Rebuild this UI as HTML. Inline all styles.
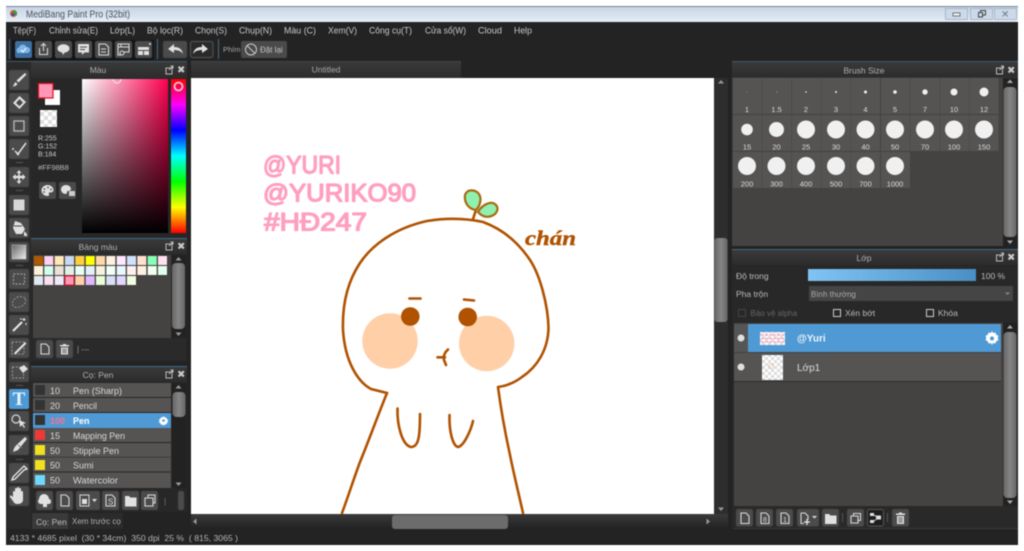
<!DOCTYPE html>
<html><head><meta charset="utf-8"><title>MediBang Paint Pro</title>
<style>
html,body{margin:0;padding:0;background:#fff;width:1024px;height:551px;overflow:hidden}
svg{display:block;filter:blur(.4px)}
text{font-family:"Liberation Sans","DejaVu Sans",sans-serif;font-size:9px;fill:#c4c4c4}
.b{fill:#4b4b4b;stroke:#3a3a3a;stroke-width:.5}
.i{fill:#e0e0e0}
.s{fill:none;stroke:#d8d8d8;stroke-width:1.1}
.l{font-size:7.5px;fill:#ddd;text-anchor:middle}
.h{fill:#b0b0b0;text-anchor:middle;font-size:8.5px}
.d{fill:#f0f0f0}
.c{fill:#555453}
.m{font-size:9.5px;fill:#c8c8c8}
.p{fill:none;stroke:#b05200;stroke-width:2.600;stroke-linecap:round;stroke-linejoin:round}
.t{font-size:25px;fill:#ff9fc0;stroke:#ff9fc0;stroke-width:1.300;stroke-linejoin:round}
.br{font-size:9px;fill:#d8d8d8}
</style></head><body>
<svg width="1024" height="551" viewBox="0 0 1024 551" xmlns="http://www.w3.org/2000/svg">
<defs>
<linearGradient id="tb" x1="0" y1="0" x2="0" y2="1"><stop offset="0" stop-color="#c6d4e4"/><stop offset="1" stop-color="#e6eef7"/></linearGradient>
<linearGradient id="sv1" x1="0" y1="0" x2="1" y2="0"><stop offset="0" stop-color="#fff"/><stop offset="1" stop-color="#ff0050"/></linearGradient>
<linearGradient id="sv2" x1="0" y1="0" x2="0" y2="1"><stop offset="0" stop-color="#000" stop-opacity="0"/><stop offset="1" stop-color="#000"/></linearGradient>
<linearGradient id="hue" x1="0" y1="0" x2="0" y2="1"><stop offset="0" stop-color="#f00"/><stop offset=".167" stop-color="#f0f"/><stop offset=".333" stop-color="#00f"/><stop offset=".5" stop-color="#0ff"/><stop offset=".667" stop-color="#0f0"/><stop offset=".833" stop-color="#ff0"/><stop offset="1" stop-color="#f00"/></linearGradient>
<linearGradient id="op" x1="0" y1="0" x2="1" y2="0"><stop offset="0" stop-color="#80c4f4"/><stop offset="1" stop-color="#4a8fc4"/></linearGradient>
<linearGradient id="hd" x1="0" y1="0" x2="0" y2="1"><stop offset="0" stop-color="#3a3a3a"/><stop offset="1" stop-color="#2c2c2c"/></linearGradient>
<linearGradient id="th" x1="0" y1="0" x2="1" y2="0"><stop offset="0" stop-color="#666"/><stop offset=".5" stop-color="#858585"/><stop offset="1" stop-color="#666"/></linearGradient>
<linearGradient id="gr" x1="0" y1="0" x2="1" y2="1"><stop offset="0" stop-color="#666"/><stop offset="1" stop-color="#eee"/></linearGradient>
<linearGradient id="hs" x1="0" y1="0" x2="0" y2="1"><stop offset="0" stop-color="#3a3a3a"/><stop offset="1" stop-color="#222"/></linearGradient>
<pattern id="ck" width="8" height="8" patternUnits="userSpaceOnUse"><rect width="8" height="8" fill="#fff"/><rect width="4" height="4" fill="#ddd"/><rect x="4" y="4" width="4" height="4" fill="#ddd"/></pattern>
<pattern id="ck2" width="6" height="6" patternUnits="userSpaceOnUse"><rect width="6" height="6" fill="#fff"/><rect width="3" height="3" fill="#ddd"/><rect x="3" y="3" width="3" height="3" fill="#ddd"/></pattern>
</defs>

<rect x="6" y="6" width="1012" height="539" fill="#232323"/>
<!-- title -->
<rect x="6" y="7" width="1012" height="15" fill="url(#tb)"/>
<rect x="6" y="6" width="1012" height="1" fill="#7d8894"/>
<circle cx="13.5" cy="13.5" r="3.5" fill="#d8562c"/><path d="M13.500 10a3.500 3.500 0 0 1 3 5.500l-3-2z" fill="#3d9a4a"/><circle cx="13" cy="14.500" r="1.600" fill="#2d5d9c"/>
<text x="26" y="17.500" textLength="104" lengthAdjust="spacingAndGlyphs" style="font-size:9.700px;fill:#4b5058">MediBang Paint Pro (32bit)</text>
<g fill="#ccd9e8" stroke="#97a8ba" stroke-width=".7"><rect x="945.500" y="8.500" width="22" height="11"/><rect x="970.500" y="8.500" width="22" height="11"/><rect x="994.500" y="8.500" width="22" height="11"/></g>
<rect x="953" y="13" width="7" height="3" fill="#f4f8fc" stroke="#444" stroke-width=".7"/>
<path d="M978.500 12.500h4v4.500h-4zM980.500 12.500v-2h5v4.500h-3" fill="none" stroke="#444"/>
<text x="1001" y="17.500" style="font-size:10px;fill:#6c7888">✕</text>

<!-- menu -->
<g>
<text class="m" x="13" y="33.500" textLength="23" lengthAdjust="spacingAndGlyphs">Tệp(F)</text><text class="m" x="49" y="33.500" textLength="49" lengthAdjust="spacingAndGlyphs">Chỉnh sửa(E)</text><text class="m" x="110" y="33.500" textLength="25" lengthAdjust="spacingAndGlyphs">Lớp(L)</text><text class="m" x="147" y="33.500" textLength="36" lengthAdjust="spacingAndGlyphs">Bộ lọc(R)</text><text class="m" x="195" y="33.500" textLength="32" lengthAdjust="spacingAndGlyphs">Chọn(S)</text><text class="m" x="239" y="33.500" textLength="33" lengthAdjust="spacingAndGlyphs">Chụp(N)</text><text class="m" x="284" y="33.500" textLength="32" lengthAdjust="spacingAndGlyphs">Màu (C)</text><text class="m" x="328" y="33.500" textLength="29" lengthAdjust="spacingAndGlyphs">Xem(V)</text><text class="m" x="369" y="33.500" textLength="43" lengthAdjust="spacingAndGlyphs">Công cụ(T)</text><text class="m" x="425" y="33.500" textLength="41" lengthAdjust="spacingAndGlyphs">Cửa sổ(W)</text><text class="m" x="478" y="33.500" textLength="24" lengthAdjust="spacingAndGlyphs">Cloud</text><text class="m" x="514" y="33.500" textLength="18" lengthAdjust="spacingAndGlyphs">Help</text>
</g>

<!-- toolbar -->
<rect x="9" y="39" width="1" height="20" fill="#4d6a80"/><rect x="157" y="39" width="1" height="20" fill="#4d6a80"/><rect x="218" y="39" width="1" height="20" fill="#4d6a80"/>
<rect x="12" y="40" width="142" height="20" fill="#151515"/>
<rect x="15" y="41" width="17" height="17" rx="2" fill="#3e6f9e"/>
<path d="M18 53a3 3 0 0 1 1-5.500 4 4 0 0 1 7.500-.5 3 3 0 0 1 1 6z" fill="#7fb6ea"/><path d="M21 50l2 2 3-4" stroke="#fff" fill="none"/>
<g class="b"><rect x="35" y="41" width="17" height="17" rx="2"/><rect x="55" y="41" width="17" height="17" rx="2"/><rect x="75" y="41" width="17" height="17" rx="2"/><rect x="95" y="41" width="17" height="17" rx="2"/><rect x="115" y="41" width="17" height="17" rx="2"/><rect x="135" y="41" width="17" height="17" rx="2"/><rect x="163" y="41" width="24" height="17" rx="2"/></g>
<rect x="190.500" y="41.500" width="22.500" height="16" rx="2" fill="#2a2a2a" stroke="#555"/>
<path class="s" d="M39.500 48v6.500h8v-6.500M43.500 51v-7M41 46l2.500-2.500 2.500 2.500"/>
<ellipse cx="63.500" cy="48.500" rx="6" ry="4.200" class="i"/><path class="i" d="M62 52l1 3 2-3z"/>
<rect x="78" y="44" width="11" height="8.500" class="i"/><path class="i" d="M82 52v3l3-3z"/><path d="M80 47h7M80 49.500h5" stroke="#4b4b4b"/>
<path class="s" d="M99 44h6.500l3 3v8h-9.500zM101 49h5M101 52h5"/>
<path class="s" d="M118 44h11v8h-5M118 44v11h4M118 47h11M121 44v3"/><circle cx="122" cy="53" r="2" class="s"/>
<path class="i" d="M138 47h11v3h-11zM138 51h5v4h-5zM144 51h5v4h-5z"/><circle cx="150" cy="44" r="1" class="i"/>
<path class="i" d="M168 49l6-5v3c5 0 8 2 9 7-2-3-5-4-9-4v3z"/>
<path class="i" d="M208 49l-6-5v3c-5 0-8 2-9 7 2-3 5-4 9-4v3z"/>
<text x="223" y="52" style="font-size:7.500px;fill:#aaa">Phím</text>
<rect x="241" y="41" width="46" height="17" rx="2" fill="#4a4a4a"/>
<circle cx="251" cy="49.500" r="5.500" fill="none" stroke="#ccc" stroke-width="1"/><path d="M247 45.500l8 8" stroke="#ccc"/>
<text x="260" y="52.500" style="font-size:8px;fill:#c4c4c4">Đặt lại</text>

<!-- tool column -->
<rect x="7" y="61" width="24" height="468" fill="#2a2a2a"/>
<rect x="7" y="61" width="24" height="1" fill="#3d5566"/>
<g class="b">
<rect x="9" y="70" width="20" height="20" rx="2"/><rect x="9" y="93" width="20" height="20" rx="2"/><rect x="9" y="116" width="20" height="20" rx="2"/><rect x="9" y="139" width="20" height="20" rx="2"/><rect x="9" y="167" width="20" height="20" rx="2"/><rect x="9" y="195" width="20" height="20" rx="2"/><rect x="9" y="218" width="20" height="20" rx="2"/><rect x="9" y="242" width="20" height="20" rx="2"/><rect x="9" y="269" width="20" height="20" rx="2"/><rect x="9" y="292" width="20" height="20" rx="2"/><rect x="9" y="315" width="20" height="20" rx="2"/><rect x="9" y="338" width="20" height="20" rx="2"/><rect x="9" y="362" width="20" height="20" rx="2"/><rect x="9" y="411" width="20" height="20" rx="2"/><rect x="9" y="435" width="20" height="20" rx="2"/><rect x="9" y="463" width="20" height="20" rx="2"/><rect x="9" y="486" width="20" height="20" rx="2"/>
</g>
<g fill="#555"><rect x="16" y="162" width="7" height="1"/><rect x="16" y="190" width="7" height="1"/><rect x="16" y="265" width="7" height="1"/><rect x="16" y="385" width="7" height="1"/><rect x="16" y="459" width="7" height="1"/></g>
<path class="i" d="M25 73l1.500 1.500-8 8-2-2zM15.500 82l2 2c-1 1.500-3 2.500-5 2.500 1.500-1 1.500-3 3-4.500z"/>
<path class="i" fill-rule="evenodd" d="M19.500 96l6.500 6-6.500 7-6.500-6zM19.500 99l-3.500 4 3.500 3.300 3.500-3.800z"/>
<rect x="14" y="121" width="10" height="10" fill="none" stroke="#bbb" stroke-width="1.300"/>
<path d="M26 143l-8 11-3-3" fill="none" stroke="#e0e0e0" stroke-width="1.500"/><circle cx="13" cy="149" r="1" class="i"/><circle cx="18" cy="154" r="1.300" class="i"/>
<path class="i" d="M19 170l2.500 3h-1.700v2.700H22.500V174l3 3-3 3v-1.700h-2.700V181H21.500L19 184l-2.500-3h1.700v-2.700H15.500V180l-3-3 3-3v1.700h2.700V173H16.500z"/>
<rect x="13.500" y="199.500" width="11" height="11" fill="#d8d8d8"/>
<path class="i" d="M15 221l6 2 4 6-3 5h-6l-3-6zM24 231l3 3v2h-3z"/><path d="M14 226h8" stroke="#4b4b4b"/>
<rect x="12" y="245" width="14" height="14" fill="url(#gr)" stroke="#ccc" stroke-width=".5"/>
<rect x="13.500" y="274" width="11" height="10" fill="none" stroke="#aaa" stroke-dasharray="2 1.500"/>
<ellipse cx="19" cy="302" rx="7" ry="5" fill="none" stroke="#999" stroke-dasharray="2 1.500" transform="rotate(-25 19 302)"/>
<path d="M13 331l9-9" stroke="#e8e8e8" stroke-width="2"/><path d="M24 318v3M22.500 319.500h3M20 319h2M26 323v2" stroke="#e8e8e8"/>
<rect x="12" y="342" width="12" height="12" fill="none" stroke="#999" stroke-dasharray="2 1.500"/><path d="M14 353l11-11 1.500 1.500-11 11z" class="i"/>
<rect x="12.500" y="367" width="11" height="11" fill="none" stroke="#999" stroke-dasharray="2 1.500"/><path class="i" d="M19 368l5-3 4 4-5 4z"/>
<rect x="9" y="389" width="20" height="20" rx="2" fill="#4e9ad6"/>
<text x="19" y="405" style="font-family:'Liberation Serif',serif;font-size:19px;font-weight:bold;fill:#eaf4fb;text-anchor:middle">T</text>
<circle cx="16" cy="419" r="4" fill="none" stroke="#d8d8d8" stroke-width="1.200"/><path class="i" d="M19 420l7 3-3 1 2 3-1 1-2-3-2 2z"/>
<path class="i" d="M25 437l2 2-9 11-5 2c.5-2 1-4 2.500-6z"/><path d="M18 445l4 3" stroke="#777"/>
<path d="M24 466l3 3-3 1-9 9-3 1 1-3 9-9z" fill="none" stroke="#e8e8e8" stroke-width="1.300"/>
<path class="i" d="M13 497v-5a1 1 0 0 1 2 0v2-5a1 1 0 0 1 2 0v5-6a1 1 0 0 1 2 0v6-5a1 1 0 0 1 2 0v6-3a1 1 0 0 1 2 0v8c0 2-2 4-5 4s-4-1-5-3l-3-4c-.7-1 .7-2 1.500-1.300z"/>

<!-- Color panel -->
<rect x="31" y="61" width="156" height="177" fill="#272727"/>
<rect x="31" y="61" width="156" height="1" fill="#3d5566"/>
<rect x="31" y="62" width="156" height="16" fill="url(#hd)"/>
<text class="h" x="98" y="73">Màu</text>
<path d="M166 68h6v6h-6z" fill="none" stroke="#bbb"/><path d="M169 70l4-4M170.500 66h2.500v2.500" stroke="#bbb" fill="none"/>
<text x="177" y="73" style="font-size:10px;font-weight:bold;fill:#ccc">✖</text>
<rect x="45" y="90" width="15" height="15" fill="#fff"/>
<rect x="38.500" y="83.500" width="14.500" height="14.500" fill="#ff98b8" stroke="#e01020" stroke-width="1.200"/>
<rect x="40" y="110" width="17" height="17" fill="url(#ck)"/>
<text x="38" y="140.500" style="font-size:7px;fill:#ccc">R:255</text>
<text x="38" y="148.500" style="font-size:7px;fill:#ccc">G:152</text>
<text x="38" y="156.500" style="font-size:7px;fill:#ccc">B:184</text>
<text x="38" y="170" style="font-size:7.500px;fill:#bbb">#FF98B8</text>
<rect x="39" y="182" width="17" height="17" rx="2" fill="#4a4a4a"/><rect x="59" y="182" width="17" height="17" rx="2" fill="#4a4a4a"/>
<path class="i" d="M47.500 185c3.500 0 6 2.500 6 5 0 2-2 2.500-3.500 2.500-1.500 0-1.500 1-1 1.500.5 1.500-.5 2-1.500 2-3.500 0-6-2.500-6-5.500s2.500-5.500 6-5.500z"/><g fill="#4a4a4a"><circle cx="44.500" cy="189" r=".9"/><circle cx="48" cy="187.500" r=".9"/><circle cx="51" cy="189.500" r=".9"/><circle cx="44" cy="192" r=".9"/></g>
<path class="i" d="M66 185c3 0 5 2 5 4 0 1.500-2 2-3 2s-1 1-1 1.500-.5 1.500-1 1.500c-3 0-5-2-5-4.500s2-4.500 5-4.500z"/><rect x="69" y="191" width="6" height="5" fill="#ccc"/>
<rect x="82" y="79" width="86" height="154" fill="url(#sv1)"/>
<rect x="82" y="79" width="86" height="154" fill="url(#sv2)"/>
<rect x="171" y="79" width="15" height="154" fill="url(#hue)"/>
<circle cx="178.500" cy="86.500" r="4" fill="none" stroke="#f4c8d8" stroke-width="1.800"/>
<path d="M113 79a4 4 0 0 0 8 0" fill="none" stroke="#f4dbe4" stroke-width="1.200"/>

<!-- Palette panel -->
<rect x="31" y="238" width="156" height="124" fill="#272727"/>
<rect x="31" y="238" width="156" height="1" fill="#3f6a88"/>
<rect x="31" y="239" width="156" height="15" fill="url(#hd)"/>
<text class="h" x="98" y="250">Bảng màu</text>
<path d="M166 244h6v6h-6z" fill="none" stroke="#bbb"/><path d="M169 246l4-4M170.500 242h2.500v2.500" stroke="#bbb" fill="none"/>
<text x="177" y="249.500" style="font-size:10px;font-weight:bold;fill:#ccc">✖</text>
<rect x="33" y="255" width="138" height="83" fill="#454341"/>
<g>
<rect x="34" y="256" width="9" height="9" fill="#b05a00"/><rect x="44.300" y="256" width="9" height="9" fill="#ffd0f0"/><rect x="54.700" y="256" width="9" height="9" fill="#ffe8b8"/><rect x="65" y="256" width="9" height="9" fill="#c8d8f0"/><rect x="75.300" y="256" width="9" height="9" fill="#ffcc44"/><rect x="85.700" y="256" width="9" height="9" fill="#ffff00"/><rect x="96" y="256" width="9" height="9" fill="#ffd8a8"/><rect x="106.300" y="256" width="9" height="9" fill="#fff0e0"/><rect x="116.700" y="256" width="9" height="9" fill="#ffe8ff"/><rect x="127" y="256" width="9" height="9" fill="#d0e0ff"/><rect x="137.300" y="256" width="9" height="9" fill="#ffe0d0"/><rect x="147.700" y="256" width="9" height="9" fill="#88ffb8"/><rect x="158" y="256" width="9" height="9" fill="#ffe0f0"/>
<rect x="34" y="266" width="9" height="9" fill="#fff0d8"/><rect x="44.300" y="266" width="9" height="9" fill="#d0ffee"/><rect x="54.700" y="266" width="9" height="9" fill="#ece0d8"/><rect x="65" y="266" width="9" height="9" fill="#e0f0e8"/><rect x="75.300" y="266" width="9" height="9" fill="#e8fff8"/><rect x="85.700" y="266" width="9" height="9" fill="#e4f0f8"/><rect x="96" y="266" width="9" height="9" fill="#f8f0e0"/><rect x="106.300" y="266" width="9" height="9" fill="#f0fff8"/><rect x="116.700" y="266" width="9" height="9" fill="#e8f8ff"/><rect x="127" y="266" width="9" height="9" fill="#fff0f0"/><rect x="137.300" y="266" width="9" height="9" fill="#fff0e0"/><rect x="147.700" y="266" width="9" height="9" fill="#f0fff0"/><rect x="158" y="266" width="9" height="9" fill="#e0fff0"/>
<rect x="34" y="276" width="9" height="9" fill="#e0e8f0"/><rect x="44.300" y="276" width="9" height="9" fill="#f8e0f0"/><rect x="54.700" y="276" width="9" height="9" fill="#f0e8f8"/><rect x="65" y="276" width="9" height="9" fill="#ff98b8" stroke="#e01020"/><rect x="75.300" y="276" width="9" height="9" fill="#ffd0a8"/><rect x="85.700" y="276" width="9" height="9" fill="#e0b8ff"/><rect x="96" y="276" width="9" height="9" fill="#e8ffd8"/><rect x="106.300" y="276" width="9" height="9" fill="#d8e0f8"/><rect x="116.700" y="276" width="9" height="9" fill="#e0d8ff"/><rect x="127" y="276" width="9" height="9" fill="#f0ffe0"/>
</g>
<rect x="172" y="255" width="14" height="83" fill="#222"/>
<rect x="172" y="263" width="13" height="66" rx="4" fill="url(#th)"/>
<path d="M178.500 257l3 3.500h-6zM178.500 336l3-3.500h-6z" fill="#999"/>
<rect x="33" y="338" width="153" height="22" fill="#2a2a2a"/>
<rect x="36" y="340" width="17" height="18" rx="2" class="b"/><rect x="56" y="340" width="17" height="18" rx="2" class="b"/>
<path class="s" d="M41 344h5l3 3v7h-8z"/>
<path class="i" d="M60 345h9v1.500h-9zM63 344h3v1h-3zM61 347.500h7v7h-7z"/><path d="M63 348.500v5M64.500 348.500v5M66 348.500v5" stroke="#4b4b4b" stroke-width=".7"/>
<text x="77" y="352" style="font-size:8px;fill:#999">| ---</text>

<!-- Brush panel -->
<rect x="31" y="366" width="156" height="146" fill="#272727"/>
<rect x="31" y="366" width="156" height="1" fill="#3f6a88"/>
<rect x="31" y="367" width="156" height="15" fill="url(#hd)"/>
<text class="h" x="98" y="378">Cọ: Pen</text>
<path d="M166 372h6v6h-6z" fill="none" stroke="#bbb"/><path d="M169 374l4-4M170.500 370h2.500v2.500" stroke="#bbb" fill="none"/>
<text x="177" y="377.500" style="font-size:10px;font-weight:bold;fill:#ccc">✖</text>
<g fill="#555453">
<rect x="33" y="383" width="138" height="14"/><rect x="33" y="398" width="138" height="14"/><rect x="33" y="428" width="138" height="14"/><rect x="33" y="443" width="138" height="14"/><rect x="33" y="457.500" width="138" height="14"/><rect x="33" y="472.500" width="138" height="15.500"/>
</g>
<rect x="33" y="413" width="138" height="15" fill="#4f9ad4"/>
<g><rect x="35" y="385" width="10" height="10" fill="#333"/><rect x="35" y="400" width="10" height="10" fill="#333"/><rect x="35" y="415" width="10" height="10" fill="#333"/><rect x="35" y="430" width="10" height="10" fill="#f03838"/><rect x="35" y="445" width="10" height="10" fill="#f0e020"/><rect x="35" y="460" width="10" height="10" fill="#f0e020"/><rect x="35" y="475" width="10" height="10" fill="#70d8ff"/></g>
<text class="br" x="50" y="394">10</text><text class="br" x="73" y="394" textLength="49" lengthAdjust="spacingAndGlyphs">Pen (Sharp)</text>
<text class="br" x="50" y="409">20</text><text class="br" x="73" y="409" textLength="24" lengthAdjust="spacingAndGlyphs">Pencil</text>
<text class="br" x="50" y="424" style="fill:#ff7090;font-weight:bold">100</text><text class="br" x="73" y="424" style="fill:#fff;font-weight:bold">Pen</text>
<text class="br" x="50" y="439">15</text><text class="br" x="73" y="439" textLength="52" lengthAdjust="spacingAndGlyphs">Mapping Pen</text>
<text class="br" x="50" y="454">50</text><text class="br" x="73" y="454" textLength="46" lengthAdjust="spacingAndGlyphs">Stipple Pen</text>
<text class="br" x="50" y="468.500">50</text><text class="br" x="73" y="468.500">Sumi</text>
<text class="br" x="50" y="483.500">50</text><text class="br" x="73" y="483.500" textLength="45" lengthAdjust="spacingAndGlyphs">Watercolor</text>
<path d="M163.500 416l1 1.500 1.500-.3.500 1.500 1.500.8-.5 1.500.5 1.500-1.500.8-.5 1.500-1.500-.3-1 1.300-1-1.300-1.500.3-.5-1.500-1.500-.8.5-1.500-.5-1.500 1.500-.8.5-1.500 1.500.3z" fill="#fff"/><circle cx="163.500" cy="420.500" r="1.300" fill="#4f9ad4"/>
<rect x="172" y="383" width="14" height="105" fill="#222"/>
<rect x="172.500" y="392" width="13" height="25" rx="4" fill="url(#th)"/>
<path d="M178.500 385l3 3.500h-6zM178.500 486l3-3.500h-6z" fill="#999"/>
<g class="b"><rect x="36" y="491" width="17" height="19" rx="2"/><rect x="56" y="491" width="17" height="19" rx="2"/><rect x="76" y="491" width="24" height="19" rx="2"/><rect x="102" y="491" width="17" height="19" rx="2"/><rect x="122" y="491" width="17" height="19" rx="2"/><rect x="141" y="491" width="17" height="19" rx="2"/><rect x="178" y="491" width="6" height="19" rx="2"/></g>
<path class="i" d="M39 499a5 5 0 0 1 10 0c1 0 2 1 2 2.500s-1 2.500-2 2.500h-2v3h-4v-3h-2c-1 0-3-1-3-2.500s1-2.500 1-2.500z"/>
<path class="s" d="M61 495h5l3 3v8h-8z"/>
<rect x="80" y="495" width="9" height="11" fill="none" stroke="#d8d8d8"/><rect x="82" y="499" width="5" height="5" class="i"/><path class="i" d="M92 499h5l-2.500 3z"/>
<path class="s" d="M106 495h6l3 3v8h-9z"/><text x="108" y="504.500" style="font-size:8px;fill:#ddd">S</text>
<path class="i" d="M125 496h4l1.500 1.500h6v9h-11.500z"/>
<path class="s" d="M145 498h8v8h-8zM148 498v-3h7v8h-2"/>
<text x="164" y="504" style="font-size:8px;fill:#777">|</text>

<!-- tabs -->
<rect x="32" y="513" width="36" height="16" fill="#3a3a3a"/>
<rect x="68" y="513" width="55" height="16" fill="#2b2b2b"/>
<text x="36" y="525" style="font-size:8.500px;fill:#c0c0c0">Cọ: Pen</text>
<text x="72" y="524" style="font-size:8px;fill:#b0b0b0">Xem trước cọ</text>

<!-- Canvas -->
<rect x="191" y="61" width="270" height="17" fill="url(#hd)"/>
<rect x="191" y="61" width="270" height="1" fill="#444"/>
<text x="326" y="72.500" class="h" style="font-size:8.500px;fill:#a8a8a8">Untitled</text>
<rect x="191" y="78" width="523" height="436" fill="#fff"/>

<text class="t" x="263" y="173.500" textLength="78" lengthAdjust="spacingAndGlyphs">@YURI</text>
<text class="t" x="263" y="201.500" textLength="153" lengthAdjust="spacingAndGlyphs">@YURIKO90</text>
<text class="t" x="264" y="230.500" textLength="103" lengthAdjust="spacingAndGlyphs">#HĐ247</text>

<circle cx="390" cy="341" r="27.700" fill="#ffcfa8"/>
<circle cx="486.700" cy="343.500" r="27.700" fill="#ffcfa8"/>
<circle cx="410.300" cy="316.500" r="9.300" fill="#b05200"/>
<circle cx="467.700" cy="317" r="9.300" fill="#b05200"/>
<path class="p" stroke-width="2.200" d="M409.500 298.500h11M464 299.500l10 1"/>
<path class="p" d="M387 393L371 389C358 382 345 362 343 330C342 300 350 278 360 263C372 245 395 228 427 221C445 218 465 218 483 222C505 230 520 245 530 260C540 275 548 305 548.500 328C548 350 537 367 522 377C514 383 506 386 498 387C501 410 505 432 510 455C514 475 519 495 523 513"/>
<path class="p" d="M387 393C378 415 369 440 360 462C354 478 348 497 342 513"/>
<path class="p" d="M397.500 408.500C397 425 402 445 411 447C419 447 420 435 420 414"/>
<path class="p" d="M449.500 415C449 432 453 446 458 447C464 446 471 430 473 421"/>
<path class="p" stroke-width="2.400" d="M437.500 357.300h7.500M448 349.500C445 352 443 356 444 360L446 365"/>
<path d="M473 219L476 210" class="p" stroke-width="2.400"/>
<path d="M476 210C468 209 464 202 465 195C467 189 475 189 479 194C482 199 480 206 476 210Z" fill="#90f0b0" stroke="#a86a10" stroke-width="2.200"/>
<path d="M478 212C482 205 489 202 493 203C498 205 499 210 495 214C490 218 483 218 478 212Z" fill="#90f0b0" stroke="#a86a10" stroke-width="2.200"/>
<text x="525" y="245" textLength="51" lengthAdjust="spacingAndGlyphs" style="font-family:'Liberation Serif',serif;font-style:italic;font-weight:bold;font-size:21px;fill:#b05200;stroke:#b05200;stroke-width:.4">chán</text>

<!-- canvas scrollbars -->
<rect x="714" y="78" width="14" height="436" fill="#2d2d2d"/>
<rect x="714.500" y="238" width="13" height="84" rx="3" fill="url(#th)"/>
<path d="M721 80l3 3.500h-6zM721 511l3-3.500h-6z" fill="#999"/>
<rect x="191" y="514" width="537" height="15" fill="url(#hs)"/>
<rect x="392" y="515" width="116" height="14" rx="3" fill="#6c6c6c"/>
<path d="M193 521.500l3.500-3v6zM710 521.500l-3.500-3v6z" fill="#999"/>

<!-- Brush size panel -->
<rect x="732" y="61" width="286" height="185" fill="#454341"/>
<rect x="732" y="61" width="286" height="1" fill="#3f5a6e"/>
<rect x="732" y="62" width="286" height="15.500" fill="url(#hd)"/>
<text class="h" x="864" y="73.500">Brush Size</text>
<path d="M996.500 68h6v6h-6z" fill="none" stroke="#bbb"/><path d="M999.500 70l4-4M1001 66h2.500v2.500" stroke="#bbb" fill="none"/>
<text x="1007" y="73.500" style="font-size:10px;font-weight:bold;fill:#ccc">✖</text>
<g>
<rect class="c" x="733" y="78" width="29" height="36"/><rect class="c" x="762.500" y="78" width="29" height="36"/><rect class="c" x="792" y="78" width="29" height="36"/><rect class="c" x="821.500" y="78" width="29" height="36"/><rect class="c" x="851" y="78" width="29" height="36"/><rect class="c" x="881" y="78" width="29" height="36"/><rect class="c" x="910.500" y="78" width="29" height="36"/><rect class="c" x="940" y="78" width="29" height="36"/><rect class="c" x="969.500" y="78" width="29" height="36"/>
<rect class="c" x="733" y="115" width="29" height="36"/><rect class="c" x="762.500" y="115" width="29" height="36"/><rect class="c" x="792" y="115" width="29" height="36"/><rect class="c" x="821.500" y="115" width="29" height="36"/><rect class="c" x="851" y="115" width="29" height="36"/><rect class="c" x="881" y="115" width="29" height="36"/><rect class="c" x="910.500" y="115" width="29" height="36"/><rect class="c" x="940" y="115" width="29" height="36"/><rect class="c" x="969.500" y="115" width="29" height="36"/>
<rect class="c" x="733" y="152" width="29" height="36"/><rect class="c" x="762.500" y="152" width="29" height="36"/><rect class="c" x="792" y="152" width="29" height="36"/><rect class="c" x="821.500" y="152" width="29" height="36"/><rect class="c" x="851" y="152" width="29" height="36"/><rect class="c" x="881" y="152" width="29" height="36"/>
</g>
<g class="d">
<circle cx="747" cy="92" r=".4" opacity=".5"/><circle cx="777" cy="92" r=".5" opacity=".6"/><circle cx="806" cy="92" r=".8"/><circle cx="836" cy="92" r="1"/><circle cx="865.500" cy="92" r="1.500"/><circle cx="895" cy="92" r="1.800"/><circle cx="925" cy="92" r="2.700"/><circle cx="954" cy="92" r="3.500"/><circle cx="984" cy="92" r="4.500"/>
<circle cx="747" cy="129.500" r="5.800"/><circle cx="776.500" cy="129.500" r="7.500"/><circle cx="806" cy="129.500" r="9"/><circle cx="836" cy="129.500" r="9"/><circle cx="865.500" cy="129.500" r="9"/><circle cx="895" cy="129.500" r="9"/><circle cx="925" cy="129.500" r="9"/><circle cx="954" cy="129.500" r="9"/><circle cx="984" cy="129.500" r="9"/>
<circle cx="747" cy="166" r="9"/><circle cx="776.500" cy="166" r="9"/><circle cx="806" cy="166" r="9"/><circle cx="836" cy="166" r="9"/><circle cx="865.500" cy="166" r="9"/><circle cx="895" cy="166" r="9"/>
</g>
<text class="l" x="747" y="112">1</text><text class="l" x="776.500" y="112">1.5</text><text class="l" x="806" y="112">2</text><text class="l" x="836" y="112">3</text><text class="l" x="865.500" y="112">4</text><text class="l" x="895" y="112">5</text><text class="l" x="925" y="112">7</text><text class="l" x="954" y="112">10</text><text class="l" x="984" y="112">12</text>
<text class="l" x="747" y="149.500">15</text><text class="l" x="776.500" y="149.500">20</text><text class="l" x="806" y="149.500">25</text><text class="l" x="836" y="149.500">30</text><text class="l" x="865.500" y="149.500">40</text><text class="l" x="895" y="149.500">50</text><text class="l" x="925" y="149.500">70</text><text class="l" x="954" y="149.500">100</text><text class="l" x="984" y="149.500">150</text>
<text class="l" x="747" y="186.500">200</text><text class="l" x="776.500" y="186.500">300</text><text class="l" x="806" y="186.500">400</text><text class="l" x="836" y="186.500">500</text><text class="l" x="865.500" y="186.500">700</text><text class="l" x="895" y="186.500">1000</text>
<rect x="1003" y="78" width="15" height="168" fill="#222"/>
<rect x="1003.500" y="87" width="13" height="150" rx="4" fill="url(#th)"/>
<path d="M1010 79.500l3 3.500h-6zM1010 244l3-3.500h-6z" fill="#aaa"/>

<!-- Layer panel -->
<rect x="732" y="249" width="286" height="280" fill="#282828"/>
<rect x="732" y="249" width="286" height="1" fill="#3f6a88"/>
<rect x="732" y="250" width="286" height="15" fill="url(#hd)"/>
<text class="h" x="864" y="261">Lớp</text>
<path d="M996.500 255h6v6h-6z" fill="none" stroke="#bbb"/><path d="M999.500 257l4-4M1001 253h2.500v2.500" stroke="#bbb" fill="none"/>
<text x="1007" y="260.500" style="font-size:10px;font-weight:bold;fill:#ccc">✖</text>
<text x="736" y="279" style="font-size:8.500px;fill:#bbb">Độ trong</text>
<rect x="808" y="269" width="168" height="12" fill="url(#op)"/>
<text x="981" y="279" style="font-size:8.500px;fill:#bbb">100 %</text>
<text x="736" y="297" style="font-size:8.500px;fill:#bbb">Pha trộn</text>
<rect x="809" y="286" width="204" height="15" rx="1" fill="#454545"/>
<text x="811" y="297" style="font-size:8px;fill:#aaa">Bình thường</text>
<path d="M1005 292.500h5l-2.500 2.500z" fill="#888"/>
<rect x="738.500" y="309.500" width="7" height="7" fill="none" stroke="#444"/>
<text x="750.500" y="316" style="font-size:8px;fill:#666">Bảo vệ alpha</text>
<rect x="833.500" y="309.500" width="7" height="7" fill="none" stroke="#ccc"/>
<text x="845" y="316" style="font-size:8.500px;fill:#bbb">Xén bớt</text>
<rect x="926.500" y="309.500" width="7" height="7" fill="none" stroke="#ccc"/>
<text x="938" y="316" style="font-size:8.500px;fill:#bbb">Khóa</text>
<rect x="734" y="323" width="269" height="183" fill="#454341"/>
<rect x="734" y="324" width="14" height="28" fill="#555"/>
<rect x="748" y="324" width="253" height="28" fill="#4f9ad4"/>
<rect x="734" y="353" width="267" height="28" fill="#555453"/>
<rect x="734" y="381" width="267" height="1" fill="#2e2e2e"/>
<circle cx="741" cy="338" r="3.500" fill="#e0e0e0"/><circle cx="741" cy="367" r="3.500" fill="#e0e0e0"/>
<rect x="760" y="332" width="25" height="13" fill="url(#ck2)"/>
<path d="M761 335h23M761 338.500h23M761 342h23" stroke="#ff9fc0" stroke-width="1.300" stroke-dasharray="3 1"/>
<rect x="762" y="355" width="21" height="25" fill="url(#ck2)"/>
<circle cx="771" cy="366" r="2.500" fill="none" stroke="#e0b890" stroke-width=".6"/>
<text x="797" y="341.500" style="font-size:10px;font-weight:bold;fill:#f0f4f8">@Yuri</text>
<text x="797" y="371" style="font-size:10px;fill:#ddd">Lớp1</text>
<path d="M992 331l1.200 2 2.300-.5.700 2.200 2.200 1-.7 2.300.7 2.300-2.200 1-.7 2.200-2.300-.5-1.200 2-1.200-2-2.300.5-.7-2.200-2.200-1 .7-2.300-.7-2.300 2.200-1 .7-2.200 2.300.5z" fill="#fff"/><circle cx="992" cy="338.500" r="2" fill="#4f9ad4"/>
<rect x="1003" y="323" width="15" height="183" fill="#222"/>
<rect x="1003.500" y="332" width="13" height="166" rx="4" fill="url(#th)"/>
<path d="M1010 325l3 3.500h-6zM1010 504l3-3.500h-6z" fill="#aaa"/>
<rect x="734" y="506" width="284" height="23" fill="#292929"/>
<rect x="733" y="528" width="285" height="1" fill="#3a3a3a"/>
<g class="b"><rect x="736" y="509" width="17" height="17.500" rx="2"/><rect x="756" y="509" width="17" height="17.500" rx="2"/><rect x="776" y="509" width="17" height="17.500" rx="2"/><rect x="797" y="509" width="22" height="17.500" rx="2"/><rect x="822" y="509" width="17" height="17.500" rx="2"/><rect x="847" y="509" width="17" height="17.500" rx="2"/><rect x="892" y="509" width="17" height="17.500" rx="2"/></g>
<rect x="867.500" y="509.500" width="16" height="16.500" rx="2" fill="#1e1e1e" stroke="#555"/>
<path class="s" d="M741 513h5l3 3v7.500h-8z"/>
<path class="s" d="M761 513h5l3 3v7.500h-8z"/><text x="763" y="522" style="font-size:7px;fill:#ddd">8</text>
<path class="s" d="M781 513h5l3 3v7.500h-8z"/><text x="783" y="522" style="font-size:7px;fill:#ddd">1</text>
<path class="s" d="M801 513h4l3 3v4M801 513v10.500h3"/><path d="M804 522h6M807 519v6" stroke="#e8e8e8" stroke-width="1.300"/><path d="M812 516h5l-2.500 2.500z" class="i"/>
<path class="i" d="M825 514h4l1.500 1.500h6v8.500h-11.500z"/>
<path class="s" d="M851 516h7v7h-7zM853.500 516v-2.500h7v7h-2.500"/>
<path d="M870 513h4v3h-4zM870 520h4v3h-4z" class="i"/><rect x="876" y="515.500" width="5" height="4" fill="#e0e0e0"/><path d="M874 515l2 1.500M874 521l2-1.500" stroke="#ccc"/>
<path class="i" d="M896 513.500h9v1.500h-9zM899 512.500h3v1h-3zM897 516h7v8h-7z"/><path d="M899 517v6M900.500 517v6M902 517v6" stroke="#4b4b4b" stroke-width=".7"/>
<g fill="#555"><rect x="842" y="513" width="1" height="9"/><rect x="887" y="513" width="1" height="9"/></g>

<!-- status -->
<rect x="6" y="529" width="1012" height="16" fill="#232323"/>
<text x="10" y="541" textLength="228" lengthAdjust="spacingAndGlyphs" style="font-size:8.700px;fill:#b4b4b4">4133 * 4685 pixel &#160;(30 * 34cm) &#160;350 dpi &#160;25 % &#160;( 815, 3065 )</text>
</svg>
</body></html>
